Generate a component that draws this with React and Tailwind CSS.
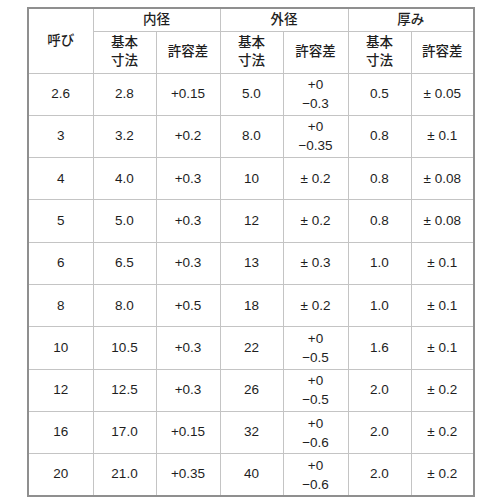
const rows = [
  ["2.6", "2.8", "+0.15", "5.0", ["+0", "−0.3"], "0.5", "± 0.05"],
  ["3", "3.2", "+0.2", "8.0", ["+0", "−0.35"], "0.8", "± 0.1"],
  ["4", "4.0", "+0.3", "10", "± 0.2", "0.8", "± 0.08"],
  ["5", "5.0", "+0.3", "12", "± 0.2", "0.8", "± 0.08"],
  ["6", "6.5", "+0.3", "13", "± 0.3", "1.0", "± 0.1"],
  ["8", "8.0", "+0.5", "18", "± 0.2", "1.0", "± 0.1"],
  ["10", "10.5", "+0.3", "22", ["+0", "−0.5"], "1.6", "± 0.1"],
  ["12", "12.5", "+0.3", "26", ["+0", "−0.5"], "2.0", "± 0.2"],
  ["16", "17.0", "+0.15", "32", ["+0", "−0.6"], "2.0", "± 0.2"],
  ["20", "21.0", "+0.35", "40", ["+0", "−0.6"], "2.0", "± 0.2"],
];

const cell = "border border-[#c4c4c4] text-center align-middle p-0";

const Value = ({ v }) =>
  Array.isArray(v) ? (
    <div className="leading-[19px]">
      <div>{v[0]}</div>
      <div>{v[1]}</div>
    </div>
  ) : (
    v
  );

export default function App() {
  return (
    <div
      className="bg-white w-[500px] h-[500px] pl-[27px] pt-[7px] text-[#1e1e1e] text-[13.5px]"
      style={{ fontFamily: '"Liberation Sans", "Noto Sans CJK JP", sans-serif' }}
    >
      <table className="table-fixed border-collapse border-2 border-[#8f8f8f] w-[446px]">
        <colgroup>
          <col className="w-[65px]" />
          <col className="w-[63px]" />
          <col className="w-[64px]" />
          <col className="w-[63px]" />
          <col className="w-[65px]" />
          <col className="w-[63px]" />
          <col className="w-[63px]" />
        </colgroup>
        <thead>
          <tr className="h-[23px]">
            <th rowSpan={2} className={cell + " font-medium"}>
              呼び
            </th>
            <th colSpan={2} className={cell + " font-medium"}>
              内径
            </th>
            <th colSpan={2} className={cell + " font-medium"}>
              外径
            </th>
            <th colSpan={2} className={cell + " font-medium"}>
              厚み
            </th>
          </tr>
          <tr className="h-[42px]">
            {[0, 1, 2].map((i) => [
              <th key={"a" + i} className={cell + " font-medium leading-[18px]"}>
                基本
                <br />
                寸法
              </th>,
              <th key={"b" + i} className={cell + " font-medium"}>
                許容差
              </th>,
            ])}
          </tr>
        </thead>
        <tbody>
          {rows.map((r, i) => (
            <tr key={i} className="h-[42.3px]">
              {r.map((v, j) => (
                <td key={j} className={cell}>
                  <Value v={v} />
                </td>
              ))}
            </tr>
          ))}
        </tbody>
      </table>
    </div>
  );
}
